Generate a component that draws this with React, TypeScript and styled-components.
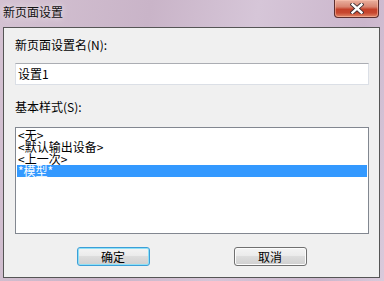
import * as React from "react";
import styled, { createGlobalStyle } from "styled-components";

const GlobalStyle = createGlobalStyle`
    html, body {
        margin: 0;
        padding: 0;
        width: 384px;
        height: 281px;
        overflow: hidden;
    }
    body {
        font-family: "Noto Sans CJK SC", "DejaVu Sans", sans-serif;
        font-size: 12px;
        color: #000;
    }
`;

const Frame = styled.div`
    width: 384px;
    height: 281px;
    box-sizing: border-box;
    display: flex;
    flex-direction: column;
    padding: 0 4px 3px 3px;
    background: linear-gradient(100deg, #d4c2d2 0%, #c9b4c8 35%, #d6c6d8 60%, #cbb6cc 85%, #d9cadb 100%);
`;

const TitleBar = styled.div`
    height: 27px;
    display: flex;
    align-items: flex-start;
    justify-content: space-between;
`;

const Title = styled.div`
    padding-top: 4px;
    font-size: 12px;
    line-height: 15px;
    color: #111;
    text-shadow: 0 0 6px rgba(255, 255, 255, 0.9);
`;

const CloseButton = styled.div`
    width: 45px;
    height: 18px;
    margin-right: 1px;
    box-sizing: border-box;
    border: 1px solid #5c2e2e;
    border-top: none;
    border-radius: 0 0 4px 4px;
    background: linear-gradient(180deg, #eab1a0 0%, #d98470 40%, #c4412a 55%, #c8472f 75%, #e0886a 100%);
    box-shadow: inset 0 0 0 1px rgba(255, 200, 180, 0.5);
    display: flex;
    align-items: center;
    justify-content: center;
`;

const Client = styled.div`
    flex: 1;
    box-sizing: border-box;
    border: 1px solid #555;
    background: #f0f0f0;
    padding: 10px 10px 0 11px;
    display: flex;
    flex-direction: column;
`;

const Label = styled.div<{ gap: number }>`
    margin-top: ${props => props.gap}px;
    line-height: 14px;
    height: 14px;
    font-size: 12px;
`;

const TextBox = styled.div`
    margin-top: 11px;
    height: 22px;
    box-sizing: border-box;
    border: 1px solid #dbdfe6;
    border-top-color: #abadb3;
    background: #fff;
    padding: 3px 2px;
    line-height: 14px;
`;

const ListBox = styled.div`
    margin-top: 13px;
    height: 107px;
    box-sizing: border-box;
    border: 1px solid #828790;
    background: #fff;
    padding: 1px;
`;

const Item = styled.div<{ selected?: boolean }>`
    height: 12px;
    line-height: 12px;
    font-size: 12px;
    padding-left: 1px;
    white-space: nowrap;
    background: ${props => (props.selected ? "#3399ff" : "transparent")};
    color: ${props => (props.selected ? "#fff" : "#000")};
`;

const ButtonRow = styled.div`
    margin-top: 13px;
    display: flex;
    justify-content: center;
    gap: 84px;
    padding-right: 1px;
`;

const Button = styled.div<{ primary?: boolean }>`
    width: 73px;
    height: 19px;
    box-sizing: border-box;
    border: 1px solid ${props => (props.primary ? "#3c9fd8" : "#707070")};
    border-radius: 3px;
    background: linear-gradient(180deg, #f4f4f4 0%, #ebebeb 45%, #dddddd 50%, #cfcfcf 100%);
    box-shadow: ${props =>
        props.primary ? "inset 0 0 0 1px #8fe0f6" : "inset 0 0 0 1px #fcfcfc"};
    display: flex;
    align-items: center;
    justify-content: center;
    font-size: 12px;
    line-height: 14px;
`;

const items = ["<无>", "<默认输出设备>", "<上一次>", "*模型*"];

export default function App() {
    return (
        <>
            <GlobalStyle />
            <Frame>
                <TitleBar>
                    <Title>新页面设置</Title>
                    <CloseButton>
                        <svg width="14" height="11" viewBox="0 0 14 11">
                            <path d="M2.5 1.5 L11.5 9.5 M11.5 1.5 L2.5 9.5" stroke="#3a2a2e" strokeWidth="4.2" strokeLinecap="square" />
                            <path d="M2.5 1.5 L11.5 9.5 M11.5 1.5 L2.5 9.5" stroke="#fff" strokeWidth="2.4" strokeLinecap="square" />
                        </svg>
                    </CloseButton>
                </TitleBar>
                <Client>
                    <Label gap={0}>新页面设置名(N):</Label>
                    <TextBox>设置1</TextBox>
                    <Label gap={15}>基本样式(S):</Label>
                    <ListBox>
                        {items.map((t, i) => (
                            <Item key={t} selected={i === 3}>{t}</Item>
                        ))}
                    </ListBox>
                    <ButtonRow>
                        <Button primary>确定</Button>
                        <Button>取消</Button>
                    </ButtonRow>
                </Client>
            </Frame>
        </>
    );
}
